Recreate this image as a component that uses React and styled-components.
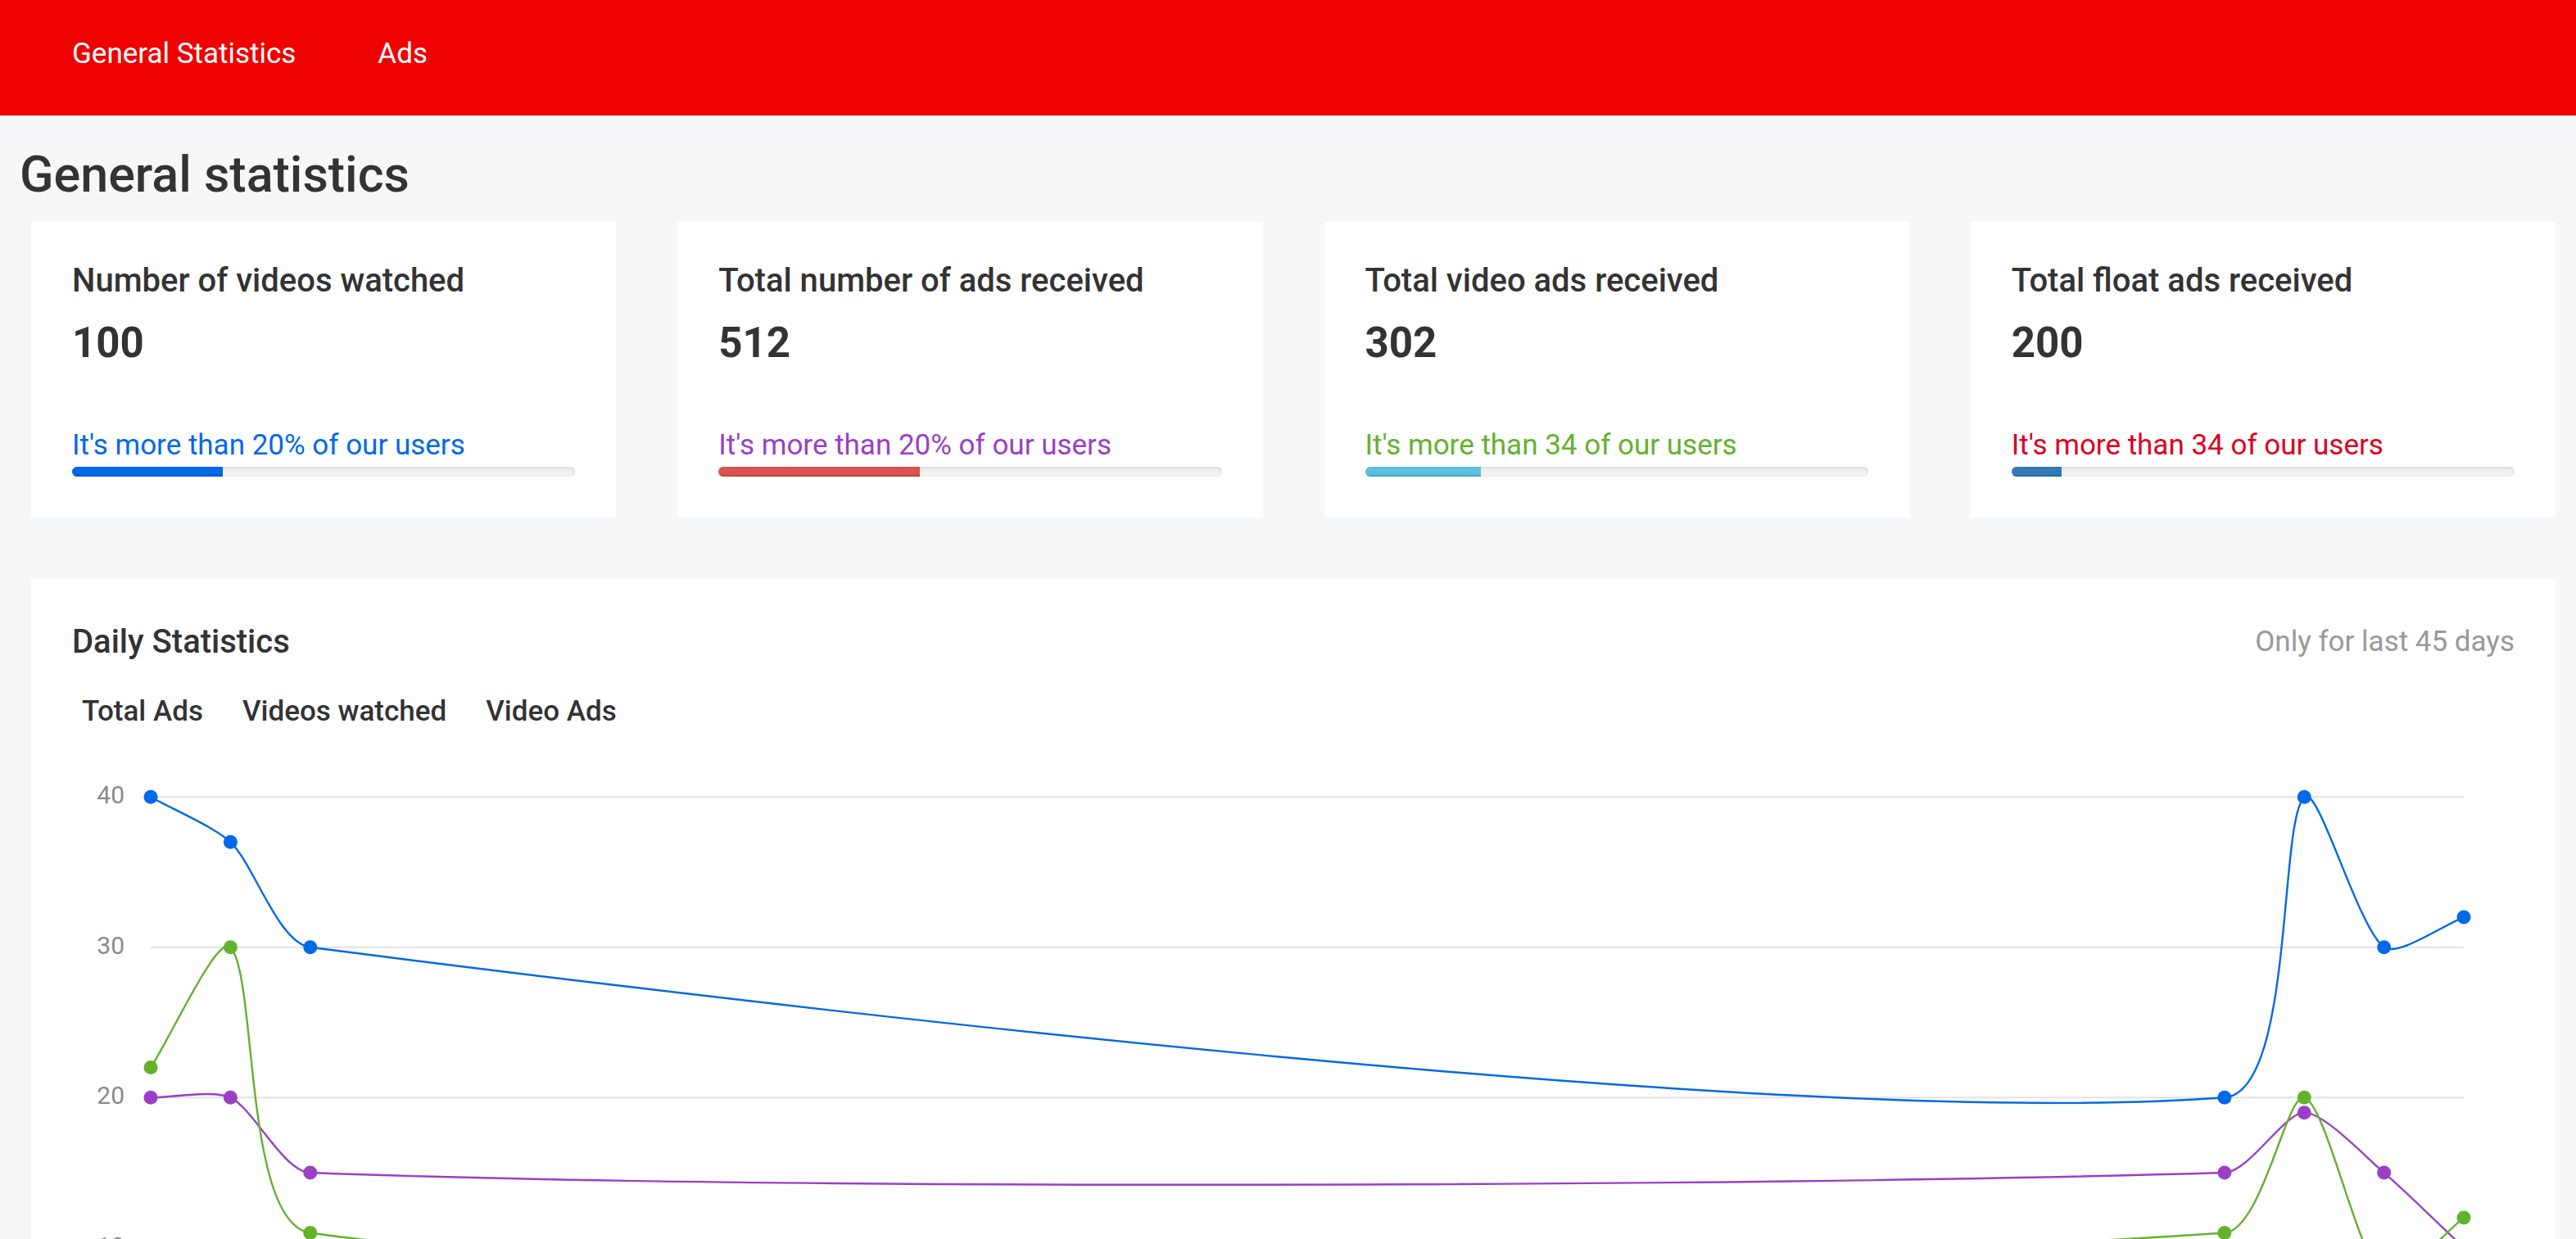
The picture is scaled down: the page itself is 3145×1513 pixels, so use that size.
import React from "react";
import styled, { createGlobalStyle } from "styled-components";

const stats = [
  { title: "Number of videos watched", value: 100, note: "It's more than 20% of our users", text: "#0069e8", bar: "#0069e8", pct: 30 },
  { title: "Total number of ads received", value: 512, note: "It's more than 20% of our users", text: "#9a3fc6", bar: "#d9534f", pct: 40 },
  { title: "Total video ads received", value: 302, note: "It's more than 34 of our users", text: "#63b22d", bar: "#5bc0de", pct: 23 },
  { title: "Total float ads received", value: 200, note: "It's more than 34 of our users", text: "#dd0021", bar: "#337ab7", pct: 10 },
];

// values per day index (only days that have data)
const series = [
  { name: "Total Ads", color: "#0069e8", data: { 0: 40, 1: 37, 2: 30, 26: 20, 27: 40, 28: 30, 29: 32 } },
  { name: "Videos watched", color: "#9a3fc6", data: { 0: 20, 1: 20, 2: 15, 26: 15, 27: 19, 28: 15, 29: 10 } },
  { name: "Video Ads", color: "#63b22d", data: { 0: 22, 1: 30, 2: 11, 26: 11, 27: 20, 28: 8, 29: 12 } },
];

const CHART = { left: 96, right: 2920, top: 73.3, step: 18.35, days: 30 };
const xAt = (i) => CHART.left + (i * (CHART.right - CHART.left)) / (CHART.days - 1);
const yAt = (v) => CHART.top + (40 - v) * CHART.step;

// chart.js style spline
const splinePath = (pts, t = 0.25) => {
  const cps = pts.map((cur, i) => {
    const prev = pts[i - 1] || cur;
    const next = pts[i + 1] || cur;
    const d01 = Math.hypot(cur[0] - prev[0], cur[1] - prev[1]);
    const d12 = Math.hypot(next[0] - cur[0], next[1] - cur[1]);
    const sum = d01 + d12 || 1;
    const fa = (t * d01) / sum;
    const fb = (t * d12) / sum;
    return {
      before: [cur[0] - fa * (next[0] - prev[0]), cur[1] - fa * (next[1] - prev[1])],
      after: [cur[0] + fb * (next[0] - prev[0]), cur[1] + fb * (next[1] - prev[1])],
    };
  });
  let d = `M${pts[0][0]},${pts[0][1]}`;
  for (let i = 1; i < pts.length; i++) {
    const a = cps[i - 1].after;
    const b = cps[i].before;
    d += ` C${a[0]},${a[1]} ${b[0]},${b[1]} ${pts[i][0]},${pts[i][1]}`;
  }
  return d;
};

const App = () => {
  return (
    <>
      <GlobalStyle />
      <Nav>
        <NavLink href="#">General Statistics</NavLink>
        <NavLink href="#">Ads</NavLink>
      </Nav>

      <Page>
        <Heading>General statistics</Heading>

        <Content>
          {/* summary cards */}
          <StatGrid>
            {stats.map((s) => (
              <StatCard key={s.title}>
                <CardTitle>{s.title}</CardTitle>
                <StatValue>{s.value}</StatValue>
                <StatNote $color={s.text}>{s.note}</StatNote>
                <Progress>
                  <ProgressFill $color={s.bar} $value={s.pct} />
                </Progress>
              </StatCard>
            ))}
          </StatGrid>

          {/* daily chart */}
          <ChartCard>
            <ChartHeader>
              <CardTitle>Daily Statistics</CardTitle>
              <ChartHint>Only for last 45 days</ChartHint>
            </ChartHeader>
            <Legend>
              <span>Total Ads</span>
              <span>Videos watched</span>
              <span>Video Ads</span>
            </Legend>
            <ChartSvg viewBox="0 0 2982 860" width="2982" height="860">
              {[40, 30, 20, 10, 0].map((v) => (
                <g key={v}>
                  <line x1={CHART.left} x2={CHART.right} y1={yAt(v)} y2={yAt(v)} stroke="#e2e2e2" strokeWidth="2" />
                  <text x="64" y={yAt(v)} dominantBaseline="middle" textAnchor="end" fill="#8a8a8a" fontSize="30" fontFamily="Roboto, sans-serif">
                    {v}
                  </text>
                </g>
              ))}
              {series.map((s) => {
                const pts = Object.entries(s.data).map(([i, v]) => [xAt(Number(i)), yAt(v)]);
                return (
                  <g key={s.name}>
                    <path d={splinePath(pts)} fill="none" stroke={s.color} strokeWidth="2.4" />
                    {pts.map((p, i) => (
                      <circle key={i} cx={p[0]} cy={p[1]} r="8.5" fill={s.color} />
                    ))}
                  </g>
                );
              })}
            </ChartSvg>
          </ChartCard>
        </Content>
      </Page>
    </>
  );
};

export default App;


const GlobalStyle = createGlobalStyle`
  html, body {
    margin: 0;
    overflow: hidden;
    background: #f6f7f9;
    font-family: Roboto, "Noto Sans", sans-serif;
    color: #333;
  }
  * { box-sizing: border-box; }
`;

const Nav = styled.nav`
  height: 141px;
  background: #f00000;
  display: flex;
  gap: 100px;
  padding: 45px 0 0 88px;
`;

const NavLink = styled.a`
  font-size: 35px;
  line-height: 1.2;
  color: #fff;
  text-decoration: none;
`;

const Page = styled.main`
  padding: 0 25px 0 24px;
`;

const Heading = styled.h1`
  margin: 36px 0 21px;
  font-size: 61px;
  line-height: 1.2;
  font-weight: 500;
  color: #333;
`;

const Content = styled.div`
  margin-left: 14px;
  display: flex;
  flex-direction: column;
  gap: 75px;
`;

const StatGrid = styled.div`
  display: grid;
  grid-template-columns: repeat(4, 1fr);
  gap: 75px;
`;

const StatCard = styled.div`
  background: #fff;
  padding: 48px 50px 50px;
`;

const CardTitle = styled.h4`
  margin: 0;
  font-size: 40px;
  line-height: 48px;
  font-weight: 500;
  color: #333;
`;

const StatValue = styled.div`
  margin-top: 21px;
  font-size: 51px;
  line-height: 1.2;
  font-weight: 700;
  color: #333;
`;

const StatNote = styled.p`
  margin: 74px 0 5px;
  font-size: 35px;
  line-height: 1.2;
  color: ${(p) => p.$color};
`;

const Progress = styled.div`
  height: 12px;
  background: #f2f2f2;
  border-radius: 8px;
  overflow: hidden;
  box-shadow: inset 0 2px 4px rgba(0, 0, 0, 0.1);
`;

const ProgressFill = styled.div`
  height: 100%;
  width: ${(p) => p.$value}%;
  background: ${(p) => p.$color};
  box-shadow: inset 0 -2px 0 rgba(0, 0, 0, 0.15);
`;

const ChartCard = styled.section`
  background: #fff;
  padding: 53px 50px 0;
  min-height: 1000px;
`;

const ChartHeader = styled.div`
  display: flex;
  justify-content: space-between;
  align-items: center;
`;

const ChartHint = styled.span`
  font-size: 35px;
  line-height: 1.2;
  color: #999;
`;

const Legend = styled.div`
  display: flex;
  gap: 48px;
  margin-top: 40px;
  padding-left: 12px;
  font-size: 35px;
  line-height: 1.2;
  font-weight: 500;
  color: #333;
`;

const ChartSvg = styled.svg`
  display: block;
  margin-top: 10px;
`;
